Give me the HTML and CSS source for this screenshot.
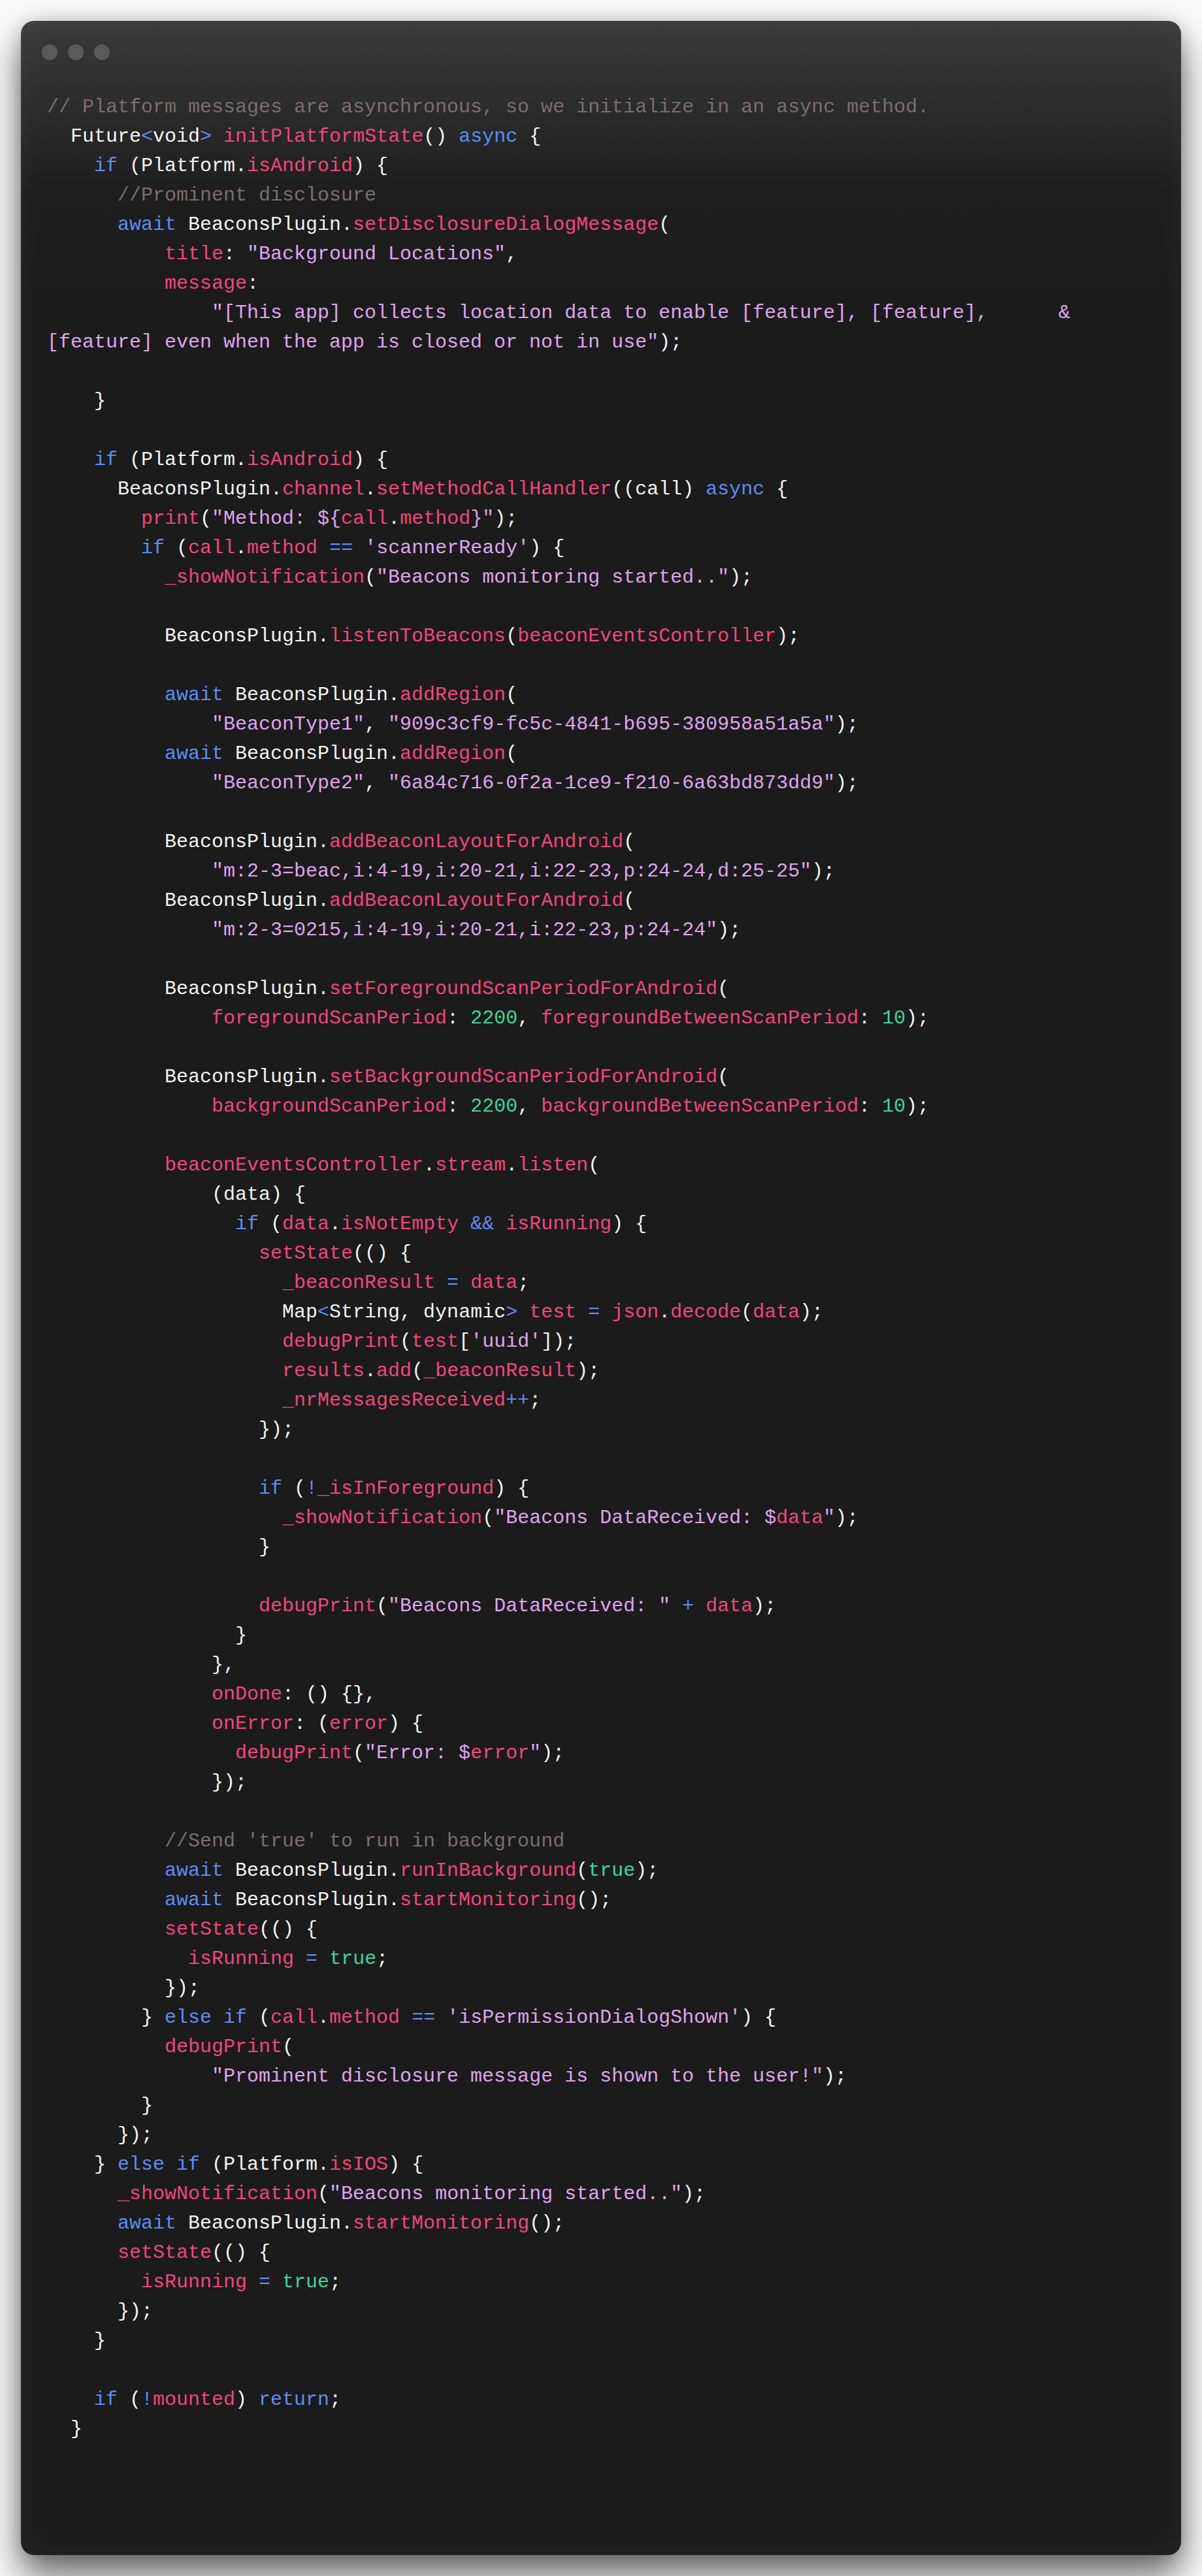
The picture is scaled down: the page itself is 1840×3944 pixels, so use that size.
FILE: index.html
```
<!doctype html>
<html lang="en">
  <head>
    <meta charset="UTF-8">
    <meta name="viewport" content="width=device-width, initial-scale=1.0">
    <title>initPlatformState</title>
    <link rel="stylesheet" href="styles.css">
  </head>
  <body>

    <div class="window">
      <div class="window-bar">
        <span class="dot"></span>
        <span class="dot"></span>
        <span class="dot"></span>
      </div>

<pre class="code"><code><span class="cm">// Platform messages are asynchronous, so we initialize in an async method.</span>
  Future<span class="kw">&lt;</span>void<span class="kw">&gt;</span> <span class="fn">initPlatformState</span>() <span class="kw">async</span> {
    <span class="kw">if</span> (Platform.<span class="fn">isAndroid</span>) {
      <span class="cm">//Prominent disclosure</span>
      <span class="kw">await</span> BeaconsPlugin.<span class="fn">setDisclosureDialogMessage</span>(
          <span class="fn">title</span>: <span class="str">"Background Locations"</span>,
          <span class="fn">message</span>:
              <span class="str">"[This app] collects location data to enable [feature], [feature],      &amp;
[feature] even when the app is closed or not in use"</span>);

    }

    <span class="kw">if</span> (Platform.<span class="fn">isAndroid</span>) {
      BeaconsPlugin.<span class="fn">channel</span>.<span class="fn">setMethodCallHandler</span>((call) <span class="kw">async</span> {
        <span class="fn">print</span>(<span class="str">"Method: ${</span><span class="fn">call</span>.<span class="fn">method</span><span class="str">}"</span>);
        <span class="kw">if</span> (<span class="fn">call</span>.<span class="fn">method</span> <span class="kw">==</span> <span class="str">'scannerReady'</span>) {
          <span class="fn">_showNotification</span>(<span class="str">"Beacons monitoring started.."</span>);

          BeaconsPlugin.<span class="fn">listenToBeacons</span>(<span class="fn">beaconEventsController</span>);

          <span class="kw">await</span> BeaconsPlugin.<span class="fn">addRegion</span>(
              <span class="str">"BeaconType1"</span>, <span class="str">"909c3cf9-fc5c-4841-b695-380958a51a5a"</span>);
          <span class="kw">await</span> BeaconsPlugin.<span class="fn">addRegion</span>(
              <span class="str">"BeaconType2"</span>, <span class="str">"6a84c716-0f2a-1ce9-f210-6a63bd873dd9"</span>);

          BeaconsPlugin.<span class="fn">addBeaconLayoutForAndroid</span>(
              <span class="str">"m:2-3=beac,i:4-19,i:20-21,i:22-23,p:24-24,d:25-25"</span>);
          BeaconsPlugin.<span class="fn">addBeaconLayoutForAndroid</span>(
              <span class="str">"m:2-3=0215,i:4-19,i:20-21,i:22-23,p:24-24"</span>);

          BeaconsPlugin.<span class="fn">setForegroundScanPeriodForAndroid</span>(
              <span class="fn">foregroundScanPeriod</span>: <span class="num">2200</span>, <span class="fn">foregroundBetweenScanPeriod</span>: <span class="num">10</span>);

          BeaconsPlugin.<span class="fn">setBackgroundScanPeriodForAndroid</span>(
              <span class="fn">backgroundScanPeriod</span>: <span class="num">2200</span>, <span class="fn">backgroundBetweenScanPeriod</span>: <span class="num">10</span>);

          <span class="fn">beaconEventsController</span>.<span class="fn">stream</span>.<span class="fn">listen</span>(
              (data) {
                <span class="kw">if</span> (<span class="fn">data</span>.<span class="fn">isNotEmpty</span> <span class="kw">&amp;&amp;</span> <span class="fn">isRunning</span>) {
                  <span class="fn">setState</span>(() {
                    <span class="fn">_beaconResult</span> <span class="kw">=</span> <span class="fn">data</span>;
                    Map<span class="kw">&lt;</span>String, dynamic<span class="kw">&gt;</span> <span class="fn">test</span> <span class="kw">=</span> <span class="fn">json</span>.<span class="fn">decode</span>(<span class="fn">data</span>);
                    <span class="fn">debugPrint</span>(<span class="fn">test</span>[<span class="str">'uuid'</span>]);
                    <span class="fn">results</span>.<span class="fn">add</span>(<span class="fn">_beaconResult</span>);
                    <span class="fn">_nrMessagesReceived</span><span class="kw">++</span>;
                  });

                  <span class="kw">if</span> (<span class="kw">!</span><span class="fn">_isInForeground</span>) {
                    <span class="fn">_showNotification</span>(<span class="str">"Beacons DataReceived: $</span><span class="fn">data</span><span class="str">"</span>);
                  }

                  <span class="fn">debugPrint</span>(<span class="str">"Beacons DataReceived: "</span> <span class="kw">+</span> <span class="fn">data</span>);
                }
              },
              <span class="fn">onDone</span>: () {},
              <span class="fn">onError</span>: (<span class="fn">error</span>) {
                <span class="fn">debugPrint</span>(<span class="str">"Error: $</span><span class="fn">error</span><span class="str">"</span>);
              });

          <span class="cm">//Send 'true' to run in background</span>
          <span class="kw">await</span> BeaconsPlugin.<span class="fn">runInBackground</span>(<span class="num">true</span>);
          <span class="kw">await</span> BeaconsPlugin.<span class="fn">startMonitoring</span>();
          <span class="fn">setState</span>(() {
            <span class="fn">isRunning</span> <span class="kw">=</span> <span class="num">true</span>;
          });
        } <span class="kw">else if</span> (<span class="fn">call</span>.<span class="fn">method</span> <span class="kw">==</span> <span class="str">'isPermissionDialogShown'</span>) {
          <span class="fn">debugPrint</span>(
              <span class="str">"Prominent disclosure message is shown to the user!"</span>);
        }
      });
    } <span class="kw">else if</span> (Platform.<span class="fn">isIOS</span>) {
      <span class="fn">_showNotification</span>(<span class="str">"Beacons monitoring started.."</span>);
      <span class="kw">await</span> BeaconsPlugin.<span class="fn">startMonitoring</span>();
      <span class="fn">setState</span>(() {
        <span class="fn">isRunning</span> <span class="kw">=</span> <span class="num">true</span>;
      });
    }

    <span class="kw">if</span> (<span class="kw">!</span><span class="fn">mounted</span>) <span class="kw">return</span>;
  }</code></pre>

    </div>

  </body>
</html>
```

FILE: styles.css
```
body {
  margin: 0;
  padding: 32px;
  background: #fafafa;
}

/* window frame */
.window {
  border-radius: 20px;
  padding: 36px 0 170px;
  background: linear-gradient(to bottom, #3a3a3a 0, #1e1e1e 260px, #1b1b1b 420px);
  box-shadow: 0 30px 56px rgba(0, 0, 0, 0.6),
              0 0 24px rgba(0, 0, 0, 0.15),
              inset 0 0 48px rgba(255, 255, 255, 0.05);
}

.window-bar {
  display: flex;
  gap: 16px;
  padding-left: 32px;
}

.dot {
  width: 24px;
  height: 24px;
  border-radius: 50%;
  background: #5a5a5a;
}

/* code */
.code {
  margin: 50px 0 0;
  padding-left: 40px;
  font-family: "Courier New", "Liberation Mono", monospace;
  font-size: 30px;
  line-height: 45px;
  color: #f4f4f4;
  white-space: pre;
}

.code code {
  font-family: inherit;
  font-size: inherit;
}

.cm  { color: #7e6b71; }
.kw  { color: #5b8ef5; }
.fn  { color: #f2467c; }
.str { color: #e0a3f0; }
.num { color: #3dd69b; }
```
